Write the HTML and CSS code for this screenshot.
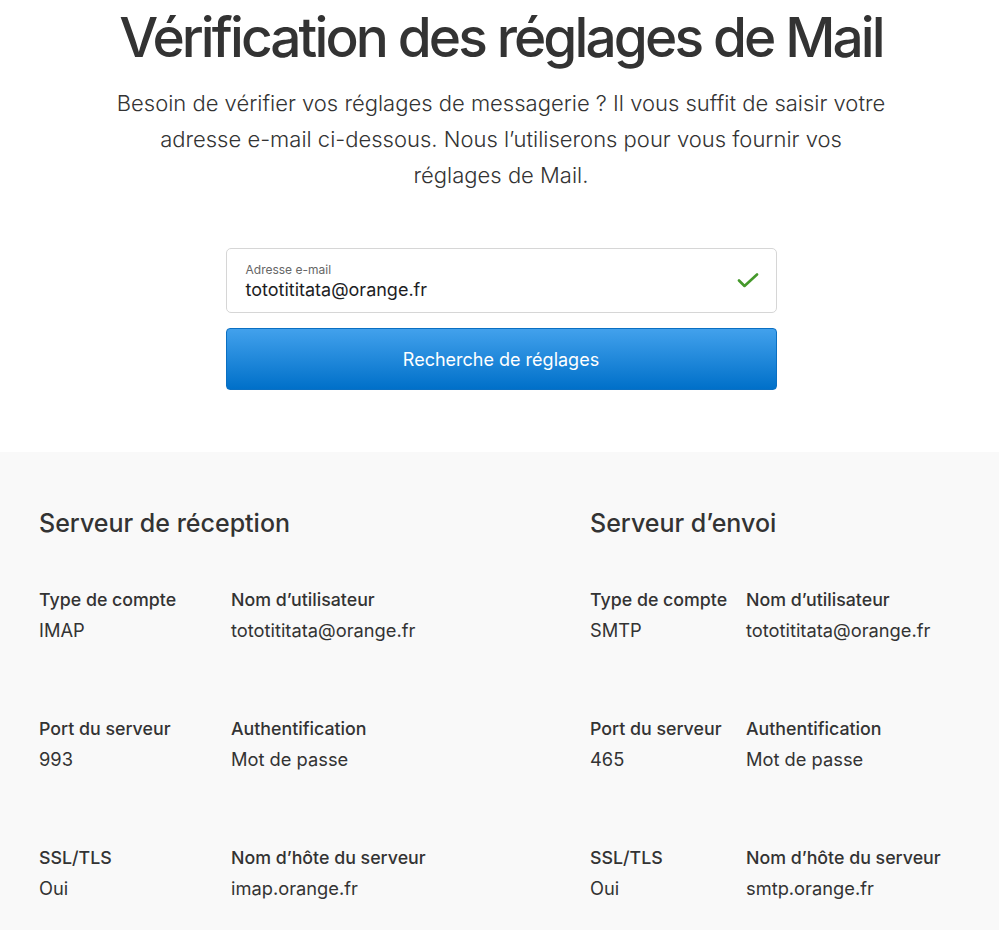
FILE: index.html
```html
<!DOCTYPE html>
<html lang="fr">
<head>
<meta charset="utf-8">
<title>Vérification des réglages de Mail</title>
<link rel="stylesheet" href="styles.css">
</head>
<body>
<header class="hero">
  <h1 class="hero-title">Vérification des réglages de Mail</h1>
  <p class="hero-intro">Besoin de vérifier vos réglages de messagerie ? Il vous suffit de saisir votre adresse e-mail ci-dessous. Nous l’utiliserons pour vous fournir vos réglages de Mail.</p>
  <form class="lookup">
    <div class="field">
      <div class="field-text">
        <span class="field-label">Adresse e-mail</span>
        <span class="field-value">tototititata@orange.fr</span>
      </div>
      <svg class="field-check" width="22" height="16" viewBox="0 0 22 16"><path d="M2 7.5 L7.5 13 L20 1.5" fill="none" stroke="#45992b" stroke-width="2.6" stroke-linecap="round" stroke-linejoin="round"/></svg>
    </div>
    <button type="button" class="lookup-btn">Recherche de réglages</button>
  </form>
</header>
<section class="results">
  <div class="server server-in">
    <h2 class="server-title">Serveur de réception</h2>
    <dl class="specs">
      <div class="spec"><dt>Type de compte</dt><dd>IMAP</dd></div>
      <div class="spec"><dt>Nom d’utilisateur</dt><dd>tototititata@orange.fr</dd></div>
      <div class="spec"><dt>Port du serveur</dt><dd>993</dd></div>
      <div class="spec"><dt>Authentification</dt><dd>Mot de passe</dd></div>
      <div class="spec"><dt>SSL/TLS</dt><dd>Oui</dd></div>
      <div class="spec"><dt>Nom d’hôte du serveur</dt><dd>imap.orange.fr</dd></div>
    </dl>
  </div>
  <div class="server server-out">
    <h2 class="server-title">Serveur d’envoi</h2>
    <dl class="specs">
      <div class="spec"><dt>Type de compte</dt><dd>SMTP</dd></div>
      <div class="spec"><dt>Nom d’utilisateur</dt><dd>tototititata@orange.fr</dd></div>
      <div class="spec"><dt>Port du serveur</dt><dd>465</dd></div>
      <div class="spec"><dt>Authentification</dt><dd>Mot de passe</dd></div>
      <div class="spec"><dt>SSL/TLS</dt><dd>Oui</dd></div>
      <div class="spec"><dt>Nom d’hôte du serveur</dt><dd>smtp.orange.fr</dd></div>
    </dl>
  </div>
</section>
</body>
</html>
```
FILE: styles.css
```css
html, body {
  margin: 0;
  padding: 0;
  background: #ffffff;
}
body {
  font-family: Inter, "Noto Sans", "Liberation Sans", sans-serif;
  color: #333333;
}
.hero {
  display: flex;
  flex-direction: column;
  align-items: center;
  padding: 4px 0 62px 3px;
}
.hero-title {
  margin: 0;
  font-size: 55px;
  line-height: 66px;
  font-weight: 500;
  letter-spacing: -2.9px;
  color: #333333;
}
.hero-intro {
  margin: 15px 0 0;
  width: 773px;
  text-align: center;
  font-size: 22px;
  line-height: 36px;
  font-weight: 300;
  color: #333333;
}
.lookup {
  margin-top: 55px;
  width: 551px;
  display: flex;
  flex-direction: column;
  gap: 15px;
}
.field {
  box-sizing: border-box;
  height: 65px;
  border: 1px solid #d6d6d6;
  border-radius: 5px;
  background: #fff;
  display: flex;
  align-items: center;
  justify-content: space-between;
  padding: 0 17px 0 19px;
}
.field-text {
  display: flex;
  flex-direction: column;
  padding-top: 2px;
}
.field-label {
  font-size: 12px;
  line-height: 16px;
  color: #666666;
}
.field-value {
  font-size: 18px;
  line-height: 24px;
  color: #1d1d1f;
}
.field-check {
  display: block;
}
.lookup-btn {
  height: 62px;
  border: 1px solid #0a6fc2;
  border-radius: 4px;
  background: linear-gradient(#42a1ec, #0070c9);
  color: #ffffff;
  font-family: inherit;
  font-size: 18px;
  font-weight: 400;
  cursor: pointer;
}
.results {
  background: #f9f9f9;
  min-height: 478px;
  display: grid;
  grid-template-columns: 551px 1fr;
  padding: 0 0 0 39px;
}
.server-title {
  margin: 56px 0 0;
  font-size: 25px;
  line-height: 30px;
  font-weight: 500;
  color: #333333;
}
.specs {
  margin: 46px 0 0;
  display: grid;
  row-gap: 67px;
}
.server-in .specs {
  grid-template-columns: 192px 1fr;
}
.server-out .specs {
  grid-template-columns: 156px 1fr;
}
.spec dt {
  font-size: 17.8px;
  line-height: 31px;
  font-weight: 500;
  color: #333333;
}
.spec dd {
  margin: 0;
  font-size: 18.3px;
  line-height: 31px;
  font-weight: 400;
  color: #333333;
}
```
